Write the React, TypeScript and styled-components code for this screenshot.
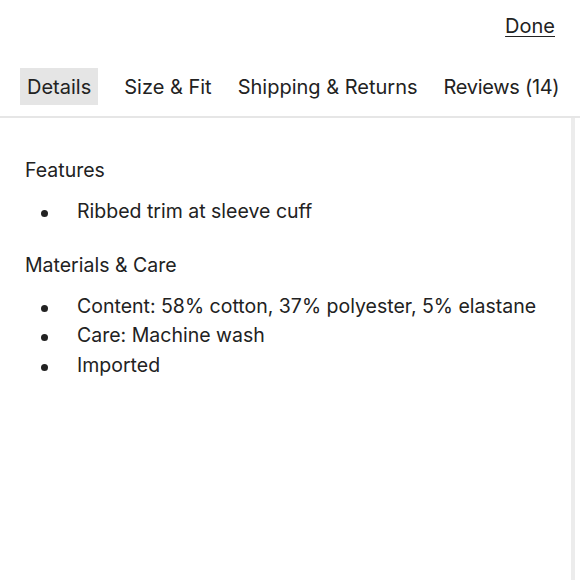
import React from 'react'
import styled, { createGlobalStyle } from 'styled-components'

const GlobalStyle = createGlobalStyle`
  html, body {
    margin: 0;
    padding: 0;
    background: #fff;
  }
  body {
    font-family: "Inter", "Noto Sans", sans-serif;
    color: #222;
  }
`

const Page = styled.div`
  width: 580px;
  height: 580px;
  display: flex;
  flex-direction: column;
  overflow: hidden;
`

const TopBar = styled.div`
  display: flex;
  justify-content: flex-end;
  padding: 14px 25px 0 0;
  height: 55px;
  box-sizing: border-box;
`

const DoneLink = styled.a`
  font-size: 20px;
  color: #222;
  text-decoration: underline;
  text-underline-offset: 3px;
  text-decoration-thickness: 1px;
  cursor: pointer;
`

const Tabs = styled.div`
  display: flex;
  align-items: center;
  gap: 12px;
  padding: 13px 0 11px 20px;
  border-bottom: 2px solid #e6e6e6;
`

const Tab = styled.button<{ $active?: boolean }>`
  font-family: inherit;
  font-size: 20px;
  color: #222;
  border: none;
  background: ${p => (p.$active ? '#e5e5e5' : 'transparent')};
  padding: 8px 7px 6px;
  line-height: 23px;
  cursor: pointer;
  white-space: nowrap;

  &:first-child {
    margin-right: 7px;
  }
  &:last-child {
    letter-spacing: -0.3px;
  }
`

const Body = styled.div`
  flex: 1;
  display: flex;
`

const Content = styled.div`
  flex: 1;
  padding: 38px 0 0 25px;
`

const Scrollbar = styled.div`
  width: 4px;
  margin-right: 5px;
  background: #ececec;
`

const Heading = styled.div`
  font-size: 19.5px;
  line-height: 28px;
`

const List = styled.ul`
  list-style: none;
  margin: 13px 0 24px;
  padding: 0;
`

const Item = styled.li`
  position: relative;
  font-size: 19.5px;
  line-height: 29.5px;
  padding-left: 52px;

  &::before {
    content: '';
    position: absolute;
    left: 16px;
    top: 13px;
    width: 7px;
    height: 7px;
    border-radius: 50%;
    background: #222;
  }
`

const sections = [
  { title: 'Features', items: ['Ribbed trim at sleeve cuff'] },
  {
    title: 'Materials & Care',
    items: ['Content: 58% cotton, 37% polyester, 5% elastane', 'Care: Machine wash', 'Imported'],
  },
]

const tabs = ['Details', 'Size & Fit', 'Shipping & Returns', 'Reviews (14)']

export default function App() {
  return (
    <Page>
      <GlobalStyle />
      <TopBar>
        <DoneLink>Done</DoneLink>
      </TopBar>
      <Tabs>
        {tabs.map((t, i) => (
          <Tab key={t} $active={i === 0}>
            {t}
          </Tab>
        ))}
      </Tabs>
      <Body>
        <Content>
          {sections.map(s => (
            <div key={s.title}>
              <Heading>{s.title}</Heading>
              <List>
                {s.items.map(it => (
                  <Item key={it}>{it}</Item>
                ))}
              </List>
            </div>
          ))}
        </Content>
        <Scrollbar />
      </Body>
    </Page>
  )
}
